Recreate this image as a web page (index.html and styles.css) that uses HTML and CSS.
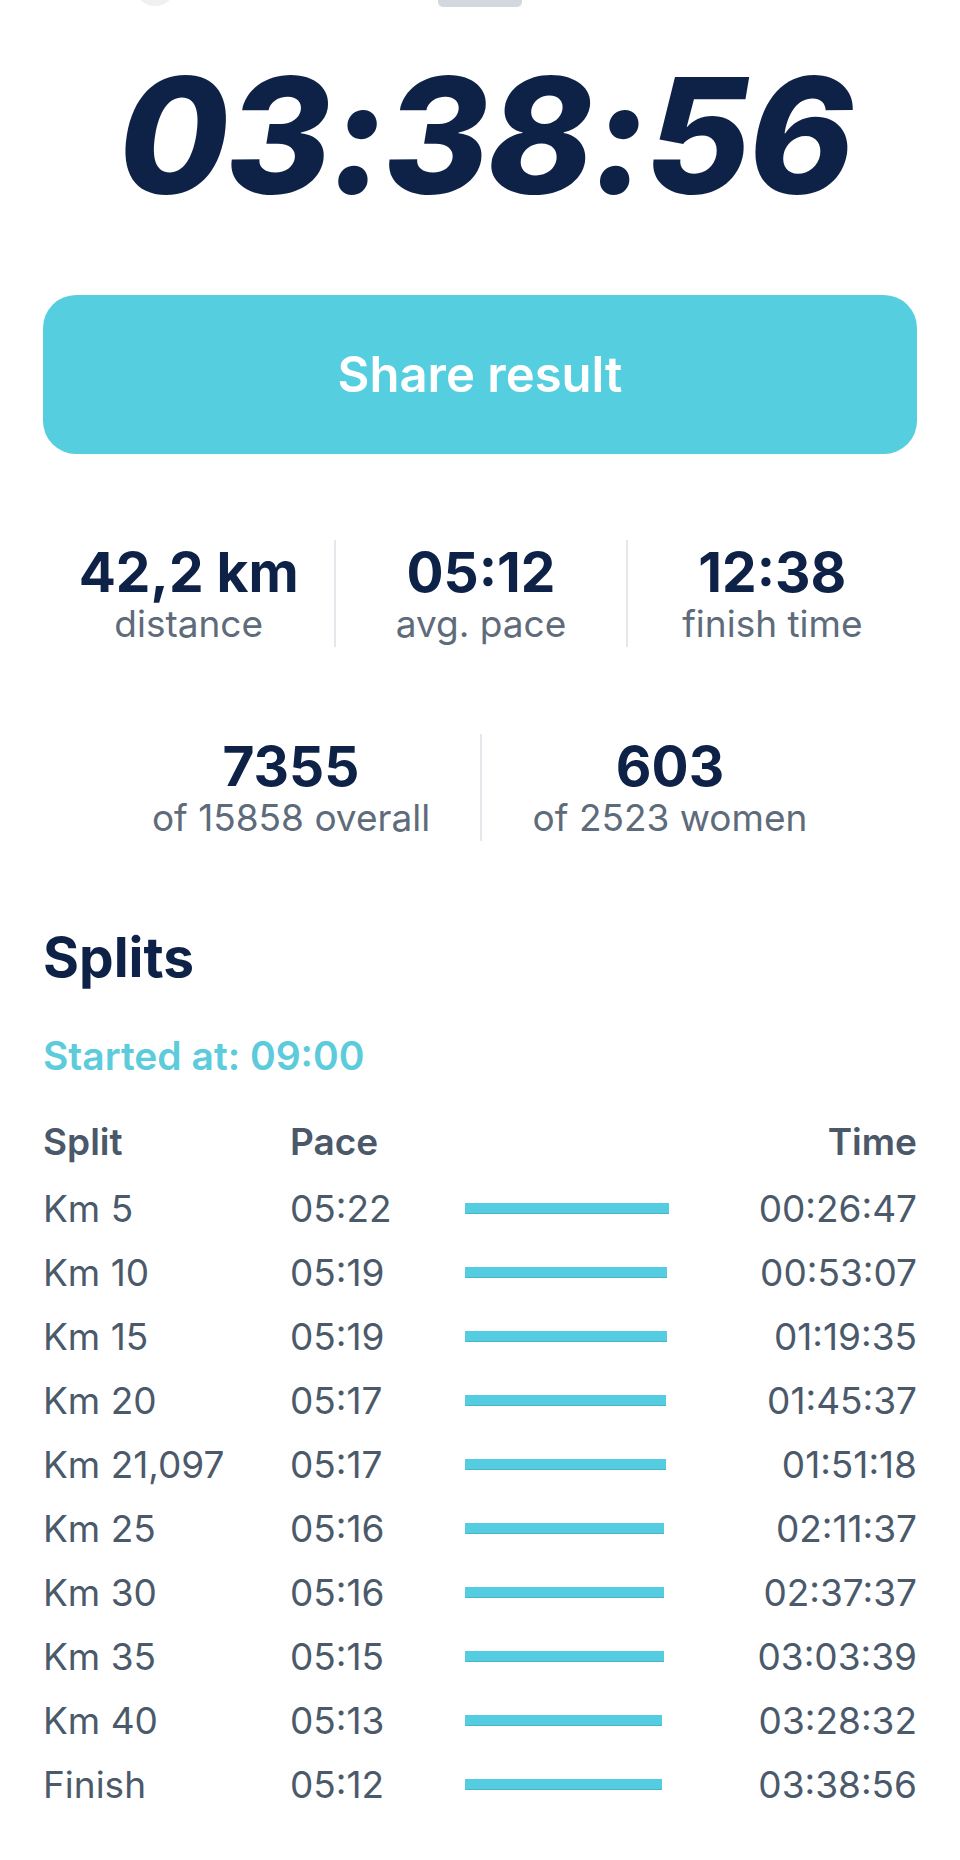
FILE: index.html
```html
<!DOCTYPE html>
<html lang="en">
<head>
<meta charset="utf-8">
<title>Result</title>
<link rel="stylesheet" href="styles.css">
</head>
<body>
<div class="page">
  <div class="topbar">
    <span class="top-dot"></span>
    <div class="handle"></div>
  </div>
  <div class="timer">03:38:56</div>
  <button class="share">Share result</button>

  <div class="stats stats-3">
    <div class="stat"><div class="stat-value">42,2 km</div><div class="stat-label">distance</div></div>
    <div class="stat"><div class="stat-value">05:12</div><div class="stat-label">avg. pace</div></div>
    <div class="stat"><div class="stat-value">12:38</div><div class="stat-label">finish time</div></div>
  </div>

  <div class="stats stats-2">
    <div class="stat"><div class="stat-value">7355</div><div class="stat-label">of 15858 overall</div></div>
    <div class="stat"><div class="stat-value">603</div><div class="stat-label">of 2523 women</div></div>
  </div>

  <h2 class="splits-title">Splits</h2>
  <div class="started">Started at: 09:00</div>

  <div class="splits">
    <div class="srow shead"><span>Split</span><span>Pace</span><span></span><span class="t">Time</span></div>
    <div class="srow"><span>Km 5</span><span>05:22</span><span class="barcell"><i class="bar" style="width:204px"></i></span><span class="t">00:26:47</span></div>
    <div class="srow"><span>Km 10</span><span>05:19</span><span class="barcell"><i class="bar" style="width:202px"></i></span><span class="t">00:53:07</span></div>
    <div class="srow"><span>Km 15</span><span>05:19</span><span class="barcell"><i class="bar" style="width:202px"></i></span><span class="t">01:19:35</span></div>
    <div class="srow"><span>Km 20</span><span>05:17</span><span class="barcell"><i class="bar" style="width:201px"></i></span><span class="t">01:45:37</span></div>
    <div class="srow"><span>Km 21,097</span><span>05:17</span><span class="barcell"><i class="bar" style="width:201px"></i></span><span class="t">01:51:18</span></div>
    <div class="srow"><span>Km 25</span><span>05:16</span><span class="barcell"><i class="bar" style="width:199px"></i></span><span class="t">02:11:37</span></div>
    <div class="srow"><span>Km 30</span><span>05:16</span><span class="barcell"><i class="bar" style="width:199px"></i></span><span class="t">02:37:37</span></div>
    <div class="srow"><span>Km 35</span><span>05:15</span><span class="barcell"><i class="bar" style="width:199px"></i></span><span class="t">03:03:39</span></div>
    <div class="srow"><span>Km 40</span><span>05:13</span><span class="barcell"><i class="bar" style="width:197px"></i></span><span class="t">03:28:32</span></div>
    <div class="srow"><span>Finish</span><span>05:12</span><span class="barcell"><i class="bar" style="width:197px"></i></span><span class="t">03:38:56</span></div>
  </div>
</div>
</body>
</html>
```
FILE: styles.css
```css
* { box-sizing: border-box; }
html, body { margin: 0; padding: 0; background: #ffffff; }
body {
  font-family: Inter, "Noto Sans", "Liberation Sans", sans-serif;
  color: #0e2147;
}
.page {
  width: 960px;
  min-height: 1860px;
  padding: 0 43px;
}
.topbar {
  position: relative;
  height: 7px;
}
.handle {
  width: 84px;
  height: 7px;
  margin: 0 auto;
  background: #d3d8de;
  border-radius: 0 0 5px 5px;
}
.top-dot {
  position: absolute;
  left: 92px;
  top: -34px;
  width: 40px;
  height: 40px;
  border-radius: 50%;
  background: #eef0f2;
}
.timer {
  margin-top: 46px;
  font-size: 160px;
  line-height: 165px;
  font-weight: 800;
  font-style: italic;
  text-align: center;
  letter-spacing: -2px;
  padding-left: 10px;
  color: #0e2147;
}
.share {
  display: flex;
  align-items: center;
  justify-content: center;
  width: 100%;
  height: 159px;
  margin-top: 77px;
  border: 0;
  border-radius: 33px;
  background: #55cee0;
  color: #ffffff;
  font-family: Inter, "Noto Sans", sans-serif;
  font-size: 49px;
  font-weight: 600;
  padding: 0;
}
.stats {
  display: grid;
}
.stats-3 {
  margin-top: 86px;
  grid-template-columns: 1fr 1fr 1fr;
}
.stats-2 {
  margin-top: 87px;
  grid-template-columns: 378px 378px;
  justify-content: center;
}
.stat {
  height: 107px;
  text-align: center;
}
.stat + .stat {
  border-left: 2px solid #e4e7eb;
}
.stat-value {
  font-size: 55px;
  line-height: 64px;
  font-weight: 700;
  color: #0e2147;
}
.stat-label {
  font-size: 37px;
  line-height: 40px;
  font-weight: 400;
  color: #5e6b7b;
}
.splits-title {
  margin: 84px 0 0;
  font-size: 55px;
  line-height: 64px;
  font-weight: 700;
  color: #0e2147;
}
.started {
  margin-top: 43px;
  font-size: 39px;
  line-height: 48px;
  font-weight: 600;
  color: #5ccbdb;
}
.splits {
  margin-top: 30px;
}
.srow {
  display: grid;
  grid-template-columns: 247px 175px 1fr auto;
  align-items: center;
  height: 64px;
  font-size: 37px;
  line-height: 64px;
  color: #4b5a6b;
}
.shead {
  font-weight: 600;
  color: #4a5869;
  margin-bottom: 3px;
}
.t { text-align: right; }
.barcell {
  display: flex;
  align-items: center;
  height: 64px;
  padding-bottom: 2px;
}
.bar {
  display: block;
  height: 11px;
  background: #55cde0;
  box-shadow: inset 0 -1px 0 rgba(40, 140, 160, 0.35);
}
```
